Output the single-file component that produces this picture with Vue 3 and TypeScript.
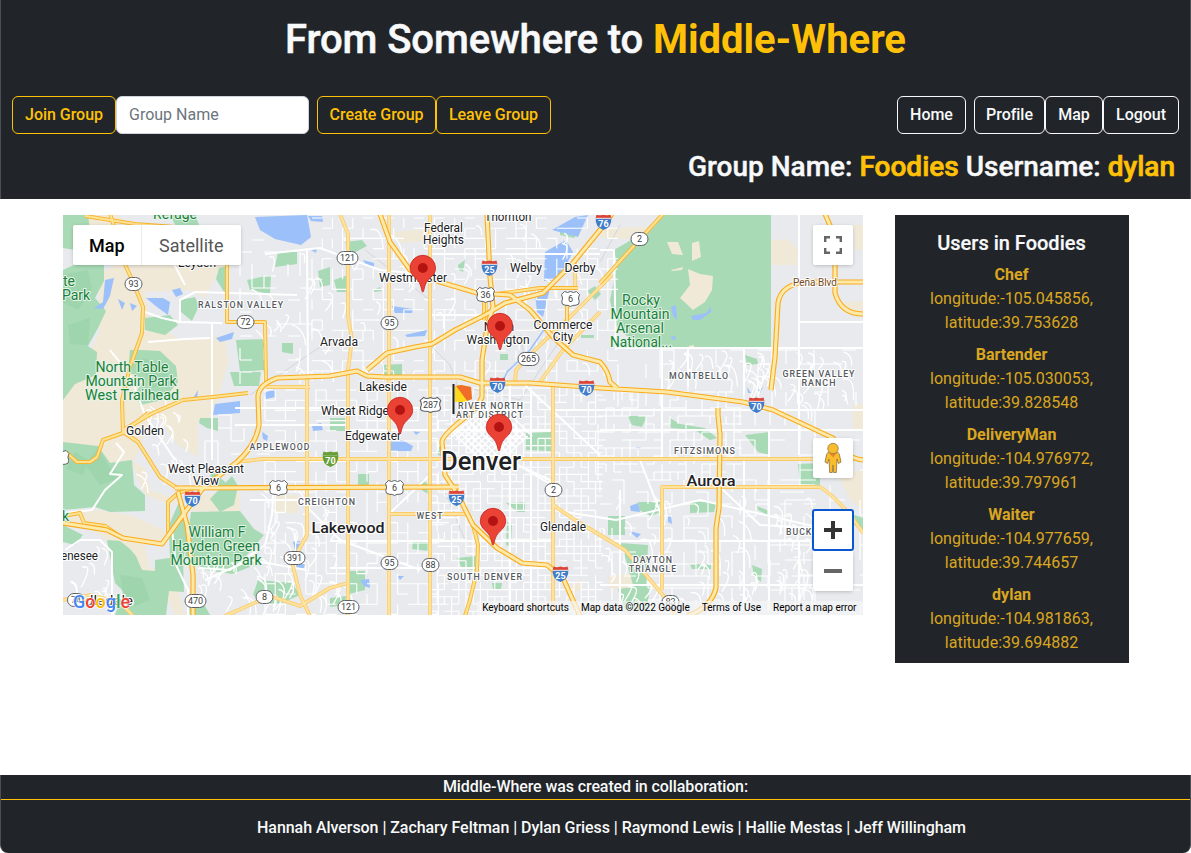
<script setup lang="ts">
interface Member { name: string; lng: string; lat: string }
interface Label { x: number; y: number; t: string; c: string; l?: number }
interface Shield { x: number; y: number; t: string; k: string }

const members: Member[] = [
  { name: 'Chef', lng: '-105.045856', lat: '39.753628' },
  { name: 'Bartender', lng: '-105.030053', lat: '39.828548' },
  { name: 'DeliveryMan', lng: '-104.976972', lat: '39.797961' },
  { name: 'Waiter', lng: '-104.977659', lat: '39.744657' },
  { name: 'dylan', lng: '-104.981863', lat: '39.694882' },
]

const tan: string[] = [
  '88,215 118,215 130,228 240,236 240,262 220,268 205,298 190,290 145,292 150,320 180,340 225,336 228,362 212,420 150,420 135,460 63,470 63,378 85,366 100,330 98,275 120,262 90,245',
  '160,420 198,420 198,457 178,445', '130,460 145,468 150,490 180,500 170,505 145,495',
  '63,517 90,509 130,515 165,530 165,545 145,545 150,570 170,560 185,615 175,615 160,580 135,570 122,550 100,535',
  '200,495 240,493 240,512 192,511', '275,495 298,495 298,513 276,513', '393,232 432,229 432,240 400,243',
  '600,229 655,226 650,240 602,238', '771,241 787,239 798,250 797,265 772,265', '840,303 863,301 863,314 845,312',
  '838,475 863,470 863,510 850,500', '608,577 632,573 632,589 610,589', '572,584 580,580 581,590 573,592', '853,404 863,404 863,430 853,430', '853,225 863,225 863,250 855,250',
]
const green: string[] = [
  '63,215 88,215 90,230 75,250 63,248', '170,215 195,215 202,232 178,230',
  '63,270 80,262 104,265 104,281 95,298 106,311 98,328 88,346 97,352 96,375 75,384 63,400',
  '85,254 100,256 104,266 86,265', '130,350 142,350 160,351 176,366 178,382 163,400 140,405 135,393 145,380 128,372',
  '145,318 170,315 178,325 165,335 145,330', '180,300 195,297 199,306 192,321 181,312',
  '236,340 265,339 264,370 240,372', '230,372 261,372 259,386 234,386', '219,268 229,266 229,290 224,292 216,279',
  '247,280 271,275 270,294 250,290', '278,252 297,252 297,264 275,267', '318,271 330,267 330,285 320,287',
  '282,343 293,343 293,354 282,352', '63,442 98,446 110,463 132,460 134,485 145,495 145,511 110,512 95,507 63,510',
  '107,540 120,541 130,549 136,556 142,570 155,571 155,560 170,558 169,525 180,500 190,525 183,560 184,592 169,591 166,615 115,615 124,592 115,583',
  '191,512 240,511 254,529 264,535 246,556 250,567 232,574 206,570 185,558', '207,490 212,470 226,483 222,490',
  '232,476 238,486 234,505 220,512 210,499', '200,418 218,418 218,431 207,428 199,423',
  '63,525 83,535 75,545 63,542', '188,597 200,597 210,615 190,615', '258,580 292,583 300,595 275,606 253,595',
  '662,215 771,215 771,348 640,348 615,325 610,300 617,265 614,250 655,226', '560,225 580,228 574,238 560,235',
  '345,242 362,240 367,246 352,254', '334,280 348,275 346,292 337,292', '458,265 465,260 463,272 459,270',
  '373,290 380,287 382,291 373,292', '382,365 402,364 402,376 384,379', '330,418 345,418 345,431 330,431',
  '438,446 443,441 443,457 438,455', '526,433 551,432 551,451 526,450',
  '358,474 369,474 369,485 358,485', '422,480 430,485 428,494 420,489', '506,503 525,502 525,512 518,512',
  '507,522 512,524 511,547 506,545', '413,541 429,542 429,551 412,549', '457,558 476,556 475,570 462,569',
  '349,571 365,571 365,590 349,594', '330,598 346,596 345,605 330,607', '492,583 502,583 501,589 493,589',
  '745,355 757,359 758,364 747,365', '745,435 769,432 769,455 758,452', '670,418 680,424 705,428 717,438 710,440 695,430 671,428',
  '628,416 647,416 642,427 632,425', '638,502 661,502 661,512 651,516 639,510', '690,501 716,503 714,512 690,513',
  '608,516 625,516 625,535 608,535', '620,543 648,545 646,590 635,592 626,560', '618,589 650,585 647,610 625,610',
  '752,565 762,569 761,582 754,576', '798,464 820,463 820,485 800,484', '757,506 769,511 768,515 758,510',
  '690,564 711,565 711,569 692,569', '587,291 595,286 601,294 595,300', '581,335 594,335 594,338 581,338',
  '500,354 508,354 508,360 500,360', '854,515 863,518 863,530 854,525',
]
const forest: string[] = [
  '63,275 88,270 92,290 78,310 63,303', '68,325 90,318 88,345 70,344', '142,358 165,365 170,384 150,388',
  '98,448 110,468 125,476 100,485 85,465', '120,575 142,578 150,600 125,610', '75,452 88,460 83,475 66,469',
]
const islands: string[] = ['667,242 678,242 683,255 672,254', '692,243 699,241 701,257 692,261', '688,269 700,274 713,276 712,290 705,302 693,310 680,298 690,285', '671,270 683,267 682,270 672,271', '689,346 694,345 694,348 689,348']
const water: string[] = [
  '255,217 307,215 311,237 301,245 275,239 260,230', '105,280 114,278 110,296 103,309 94,308 103,302',
  '118,299 125,303 122,310', '130,303 137,306 132,311', '146,298 163,298 170,302 168,315 157,307', '172,290 180,288 183,294 176,297',
  '216,338 234,332 232,339 220,342', '192,400 198,390 197,400', '215,404 240,401 240,413 213,415', '264,393 275,389 275,397 266,399',
  '363,260 374,263 374,267 366,265', '392,306 413,309 412,313 395,313', '405,335 427,330 425,336 407,337',
  '391,440 402,440 413,446 411,451 391,451', '545,252 566,240 573,252 558,280 544,281', '552,230 575,217 588,215 578,237',
  '535,293 550,288 543,317 537,312', '671,307 676,305 677,320 673,316', '691,316 706,313 711,307 711,312 700,320 693,320',
  '670,337 676,336 675,341', '747,387 751,393 748,393', '758,390 763,387 760,393', '630,506 638,503 640,512 631,511',
  '629,531 641,534 637,538', '668,516 671,516 672,524 668,522', '293,542 300,541 302,549 295,550', '293,566 305,563 304,568 296,569',
  '360,580 369,579 370,588 364,586', '413,431 420,432 416,435', '636,447 641,447 638,450', '397,576 404,576 400,580',
  '262,432 268,436 267,441 263,439', '312,425 321,423 323,430 313,431', '308,216 322,216 323,222 311,221', '311,250 317,248 316,253',
]

const motorways: string[] = [
  'M487 214 490 277 493 307 487 327 482 360 482 397 Q478 408 462 420 Q442 436 442 442 L445 475 458 495 473 525 497 548 522 563 547 565 563 578 580 616',
  'M63 523 107 530 123 538 162 544 183 515 203 488 237 462 Q256 445 259 425 L258 397 Q258 385 277 378 L330 376 357 371 367 376 385 377 460 377 480 383 530 383 600 388 667 392 743 402 773 410 833 438 Q845 458 863 460',
  'M380 214 390 242 410 270 440 282 477 293 510 295 530 310 553 337 573 355 600 362 Q608 370 610 382 L617 388',
  'M367 370 387 353 415 347 432 344 455 330 485 315 505 303 543 293 573 263 600 230 612 214',
  'M175 488 459 487', 'M771 390 775 357 778 303 Q781 284 807 282 L863 282',
  'M825 214 835 237 835 293 Q841 314 863 314',
  'M718 408 718 415 720 435 719 508 716 528 716 588 Q711 608 687 616',
  'M178 492 187 525 193 575 193 616',
]
const highways: string[] = [
  'M110 214 117 235 123 260 133 282 143 307 142 333 130 367 122 400 123 432 138 442 160 477 177 488',
  'M123 430 153 413 183 400 213 397 248 393', 'M85 216 135 224 175 227',
  'M63 456 67 453 77 462 90 462 97 457 103 440 123 433 148 413', 'M168 533 168 502 178 493 197 487',
  'M63 516 80 513 84 523 105 526 122 538', 'M484 320 484 300 490 295 540 288 578 288',
  'M663 214 600 283', 'M863 0', 'M567 295 567 330',
  'M473 525 478 545 477 570 470 600 465 616', 'M227 240 227 322 265 322 266 385',
]
const arterials: string[] = [
  'M340 214 348 234 348 316 352 340 348 370 348 616', 'M389 214V616', 'M430 214V616', 'M553 385V616',
  'M307 378 307 535 292 562 300 595 310 616', 'M266 387H310', 'M237 462 262 459H863', 'M662 590V487H820Q841 500 863 533',
  'M390 514H465', 'M486 300V335', 'M612 275 570 317 540 345 516 370 515 382', 'M575 262 575 290', 'M600 312 563 350 540 382',
  'M553 505 575 520 600 535 625 550 667 600 675 616', 'M225 616 270 596 300 606 330 588 348 583', 'M63 600 90 595 120 602 133 616',
]
const whiteRoads: string[] = [
  'M145 312 162 318 180 322 222 323', 'M180 322 180 300 195 292 297 295', 'M148 342 185 339 210 338', 'M212 323V460', 'M110 350 130 375 145 415 175 460', 'M100 220 165 226 172 260 185 285',
  'M116 443 124 452 110 474 122 475 105 490 92 510 65 513', 'M65 550 80 540 100 540 112 552 112 616', 'M172 530 176 565 188 590 188 616',
  'M200 568 230 570 265 545 272 515 274 480', 'M250 500 300 500 340 540 420 570', 'M205 580 250 560 307 570', 'M265 254 320 248 380 270 430 275', 'M307 248 308 376',
  'M430 254H600', 'M430 315H490', 'M600 250 614 250 616 350', 'M616 348H863', 'M799 214V455', 'M744 348V395', 'M662 348V460', 'M688 348V386', 'M799 322H863',
  'M345 430H553', 'M553 410H863', 'M553 510 616 520 700 500 830 530', 'M608 541H810', 'M330 541H553', 'M510 385V615', 'M531 390V615', 'M389 514 430 475', 'M330 568H553', 'M720 487 760 525 810 528',
  'M600 430 863 430', 'M600 585H863', 'M620 490V615', 'M640 460 665 525', 'M744 460V610', 'M769 430V610', 'M799 540V610', 'M475 400 510 460 560 490 555 500', 'M525 385 600 455', 'M526 469 550 480 553 490', 'M235 408H430', 'M235 425H348',
]

// Local street fabric: short deterministic segments that break up like real blocks.
let seed = 41
function rnd(): number {
  seed = (seed * 16807) % 2147483647
  return seed / 2147483647
}
function streets(x0: number, y0: number, x1: number, y1: number, step: number, keep: number): string {
  let d = ''
  for (let x = x0; x < x1; x += step)
    for (let y = y0; y < y1; y += step) {
      if (rnd() < keep) d += `M${x} ${y}h${step}`
      if (rnd() < keep) d += `M${x} ${y}v${step}`
    }
  return d
}
function curls(x0: number, y0: number, x1: number, y1: number, n: number): string {
  let d = ''
  for (let i = 0; i < n; i++) {
    const x = x0 + rnd() * (x1 - x0)
    const y = y0 + rnd() * (y1 - y0)
    const a = 8 + rnd() * 14
    d += `M${x.toFixed(1)} ${y.toFixed(1)}q${(a * 0.6).toFixed(1)} ${(rnd() * 10 - 5).toFixed(1)} ${(a * (rnd() - 0.3)).toFixed(1)} ${a.toFixed(1)}`
  }
  return d
}
const fineStreets =
  streets(312, 218, 612, 380, 10.2, 0.36) + streets(265, 390, 440, 616, 10.2, 0.5) +
  streets(430, 388, 600, 616, 7.2, 0.68) + streets(598, 392, 740, 480, 8, 0.52) +
  streets(600, 480, 810, 616, 12, 0.36) + streets(618, 350, 863, 405, 14, 0.3) + streets(740, 410, 863, 616, 15, 0.22) +
  streets(240, 240, 312, 375, 12, 0.26) + streets(205, 415, 265, 480, 13, 0.3)
const curvyStreets =
  curls(310, 220, 600, 370, 45) + curls(660, 350, 800, 385, 34) + curls(790, 350, 850, 410, 20) + curls(600, 495, 810, 605, 75) +
  curls(195, 555, 345, 600, 44) + curls(260, 490, 345, 560, 22) + curls(130, 395, 185, 480, 20) + curls(68, 535, 110, 600, 12) + curls(240, 250, 330, 370, 18)
let downtown = ''
for (let i = 0; i < 12; i++) {
  downtown += `M${452 + i * 4.2} ${431 - i * 2.6}l34 34`
  downtown += `M${452 + i * 3.6} ${437 + i * 3}l36 -34`
}

const labels: Label[] = [
  { x: 175, y: 219, t: 'Refuge', c: 'park' }, { x: 197, y: 267, t: 'Leyden', c: 'town' },
  { x: 63, y: 286, t: 'te', c: 'park start' }, { x: 62, y: 300, t: 'Park', c: 'park start' },
  { x: 241, y: 308, t: 'RALSTON VALLEY', c: 'hood', l: 86 }, { x: 339, y: 345.5, t: 'Arvada', c: 'town', l: 38 },
  { x: 132, y: 372, t: 'North Table', c: 'park', l: 73 }, { x: 131, y: 386, t: 'Mountain Park', c: 'park', l: 91 }, { x: 132, y: 400, t: 'West Trailhead', c: 'park', l: 94 },
  { x: 443.5, y: 231.5, t: 'Federal', c: 'town', l: 39 }, { x: 443.5, y: 243.5, t: 'Heights', c: 'town', l: 41 }, { x: 508, y: 221, t: 'Thornton', c: 'town', l: 47 },
  { x: 413, y: 281.5, t: 'Westminster', c: 'town', l: 68 }, { x: 526, y: 271.5, t: 'Welby', c: 'town', l: 32 }, { x: 580, y: 271.5, t: 'Derby', c: 'town', l: 31 },
  { x: 499, y: 331, t: 'North', c: 'town' }, { x: 498, y: 343.5, t: 'Washington', c: 'town', l: 63 },
  { x: 563, y: 328.5, t: 'Commerce', c: 'town', l: 59 }, { x: 563, y: 340.5, t: 'City', c: 'town' }, { x: 383, y: 390.5, t: 'Lakeside', c: 'town', l: 48 },
  { x: 355, y: 414.5, t: 'Wheat Ridge', c: 'town', l: 68 }, { x: 373, y: 439.5, t: 'Edgewater', c: 'town', l: 56 },
  { x: 491, y: 408.5, t: 'RIVER NORTH', c: 'hood', l: 66 }, { x: 490, y: 417.5, t: 'ART DISTRICT', c: 'hood', l: 68 },
  { x: 641, y: 305, t: 'Rocky', c: 'park', l: 38 }, { x: 640, y: 319, t: 'Mountain', c: 'park', l: 59 }, { x: 640, y: 333, t: 'Arsenal', c: 'park', l: 48 }, { x: 641, y: 347, t: 'National...', c: 'park', l: 62 },
  { x: 815, y: 286, t: 'Peña Blvd', c: 'road', l: 44 }, { x: 699, y: 378.5, t: 'MONTBELLO', c: 'hood', l: 60 },
  { x: 819, y: 376.5, t: 'GREEN VALLEY', c: 'hood', l: 73 }, { x: 819, y: 385.5, t: 'RANCH', c: 'hood', l: 35 },
  { x: 145, y: 434.5, t: 'Golden', c: 'town', l: 38 }, { x: 280, y: 449.5, t: 'APPLEWOOD', c: 'hood', l: 61 },
  { x: 206, y: 472.5, t: 'West Pleasant', c: 'town', l: 76 }, { x: 206, y: 484.5, t: 'View', c: 'town', l: 26 },
  { x: 327, y: 504.5, t: 'CREIGHTON', c: 'hood', l: 58 }, { x: 348, y: 532.5, t: 'Lakewood', c: 'city', l: 73 },
  { x: 217, y: 537, t: 'William F', c: 'park', l: 57 }, { x: 216, y: 551, t: 'Hayden Green', c: 'park', l: 88 }, { x: 216, y: 565, t: 'Mountain Park', c: 'park', l: 91 },
  { x: 61, y: 559.5, t: 'enesee', c: 'town start', l: 37 }, { x: 62, y: 521, t: 'k', c: 'park start' },
  { x: 481, y: 470, t: 'Denver', c: 'metro', l: 80 }, { x: 430, y: 518.5, t: 'WEST', c: 'hood', l: 27 }, { x: 563, y: 530.5, t: 'Glendale', c: 'town', l: 46 },
  { x: 485, y: 579.5, t: 'SOUTH DENVER', c: 'hood', l: 76 }, { x: 705, y: 453.5, t: 'FITZSIMONS', c: 'hood', l: 62 },
  { x: 711, y: 485.5, t: 'Aurora', c: 'city', l: 49 }, { x: 653, y: 562.5, t: 'DAYTON', c: 'hood', l: 40 }, { x: 653, y: 571.5, t: 'TRIANGLE', c: 'hood', l: 48 },
  { x: 786, y: 534.5, t: 'BUCKLEY', c: 'hood start' }, { x: 107, y: 605, t: 'Idledale', c: 'town', l: 52 },
]
const shields: Shield[] = [
  { x: 133.5, y: 284, t: '93', k: 's' }, { x: 245.5, y: 322, t: '72', k: 's' }, { x: 347.5, y: 258, t: '121', k: 's' }, { x: 389.5, y: 323, t: '95', k: 's' },
  { x: 528.5, y: 359, t: '265', k: 's' }, { x: 639.5, y: 239, t: '2', k: 's' }, { x: 294.5, y: 558, t: '391', k: 's' }, { x: 264.5, y: 597, t: '8', k: 's' },
  { x: 195.5, y: 601, t: '470', k: 's' }, { x: 389.5, y: 563, t: '95', k: 's' }, { x: 430.5, y: 565, t: '88', k: 's' }, { x: 553.5, y: 490, t: '2', k: 's' },
  { x: 348.5, y: 607, t: '121', k: 's' }, { x: 670.5, y: 602, t: '83', k: 's' }, { x: 76, y: 600, t: '74', k: 's' },
  { x: 485.5, y: 295, t: '36', k: 'u' }, { x: 570.5, y: 299, t: '6', k: 'u' }, { x: 430.5, y: 405, t: '287', k: 'u' }, { x: 278.5, y: 488, t: '6', k: 'u' }, { x: 394.5, y: 488, t: '6', k: 'u' }, { x: 60, y: 458, t: '', k: 'u' },
  { x: 489.5, y: 268, t: '25', k: 'i' }, { x: 603.5, y: 222, t: '76', k: 'i' }, { x: 497.5, y: 385, t: '70', k: 'i' }, { x: 586.5, y: 388, t: '70', k: 'i' }, { x: 756.5, y: 405, t: '70', k: 'i' },
  { x: 192.5, y: 499, t: '70', k: 'i' }, { x: 456.5, y: 498, t: '25', k: 'i' }, { x: 560.5, y: 574, t: '25', k: 'i' }, { x: 330.5, y: 459, t: '70', k: 'b' },
]
const pins: [number, number][] = [[422.8, 268], [500, 326], [400, 410], [499, 427], [493, 521]]
const logo = [
  { ch: 'G', c: '#4285f4' }, { ch: 'o', c: '#ea4335' }, { ch: 'o', c: '#fbbc04' }, { ch: 'g', c: '#4285f4' }, { ch: 'l', c: '#34a853' }, { ch: 'e', c: '#ea4335' },
]
const authors = 'Hannah Alverson | Zachary Feltman | Dylan Griess | Raymond Lewis | Hallie Mestas | Jeff Willingham'
</script>

<template>
  <div class="page">
    <header class="top">
      <h1>From Somewhere to <span class="gold">Middle-Where</span></h1>
      <nav class="bar">
        <button class="btn join">Join Group</button>
        <input class="field" type="text" placeholder="Group Name" />
        <button class="btn create">Create Group</button>
        <button class="btn leave">Leave Group</button>
        <span class="spacer"></span>
        <button class="btn light home">Home</button>
        <button class="btn light profile">Profile</button>
        <button class="btn light mapbtn">Map</button>
        <button class="btn light logout">Logout</button>
      </nav>
      <h3>Group Name: <span class="gold">Foodies</span> Username: <span class="gold">dylan</span></h3>
    </header>

    <main class="body">
      <section class="map">
        <svg class="canvas" viewBox="63 215 800 400" width="800" height="400">
          <rect x="63" y="215" width="800" height="400" fill="#e8eaed" />
          <polygon v-for="(p, i) in tan" :key="'t' + i" :points="p" fill="#f0e9d8" />
          <polygon v-for="(p, i) in green" :key="'g' + i" :points="p" fill="#a8dab5" />
          <polygon v-for="(p, i) in forest" :key="'f' + i" :points="p" fill="#98d2a8" opacity=".6" />
          <polygon v-for="(p, i) in islands" :key="'i' + i" :points="p" fill="#f0e9d8" />
          <polygon v-for="(p, i) in water" :key="'w' + i" :points="p" fill="#9cc0f9" />
          <g fill="none" stroke="#d3d6db" stroke-width="1">
            <path d="M430 345 450 365 470 420M455 385 520 400 560 340M520 335 525 360M600 262 620 225M440 480 465 540M250 395 330 340M365 250 430 300" />
          </g>
          <g fill="none" stroke="#fff" stroke-linejoin="round">
            <path :d="fineStreets" stroke-width="1.1" />
            <path :d="curvyStreets" stroke-width="1.3" />
            <path :d="downtown" stroke-width="1.5" />
            <path v-for="(d, i) in whiteRoads" :key="'r' + i" :d="d" stroke-width="2" />
          </g>
          <path d="M502 384 507 372 530 350 545 328" fill="none" stroke="#9cc0f9" stroke-width="1.5" />
          <g fill="none" stroke-linejoin="round">
            <path v-for="(d, i) in arterials" :key="'a' + i" :d="d" stroke="#fbcb68" stroke-width="3.8" />
            <path v-for="(d, i) in arterials" :key="'b' + i" :d="d" stroke="#fde2a0" stroke-width="2.2" />
            <path v-for="(d, i) in highways" :key="'c' + i" :d="d" stroke="#f9b52e" stroke-width="4" />
            <path v-for="(d, i) in highways" :key="'d' + i" :d="d" stroke="#fde293" stroke-width="2.2" />
            <path v-for="(d, i) in motorways" :key="'e' + i" :d="d" stroke="#f9ab1c" stroke-width="5.2" />
            <path v-for="(d, i) in motorways" :key="'m' + i" :d="d" stroke="#fde9a9" stroke-width="3" />
          </g>

          <g v-for="(s, i) in shields" :key="'s' + i" :transform="`translate(${s.x} ${s.y})`" text-anchor="middle">
            <template v-if="s.k === 's'">
              <rect :x="s.t.length > 2 ? -10.5 : -8.5" y="-6.5" :width="s.t.length > 2 ? 21 : 17" height="13" rx="6.5" fill="#fff" stroke="#5f6368" />
              <text class="num" y="3.4">{{ s.t }}</text>
            </template>
            <template v-else-if="s.k === 'u'">
              <path :transform="s.t.length > 2 ? 'scale(1.15 1)' : ''" d="M-6 -7.5Q-3 -5.5 0 -7.5Q3 -5.5 6 -7.5L9 -4.5Q7 -1 8.7 2.5Q9 6 5.5 6.2Q2 6 0 7.5Q-2 6 -5.5 6.2Q-9 6 -8.7 2.5Q-7 -1 -9 -4.5Z" fill="#fff" stroke="#5f6368" />
              <text class="num" y="3.4">{{ s.t }}</text>
            </template>
            <template v-else>
              <path d="M-7 -7.5Q-3.5 -6 0 -7.5Q3.5 -6 7 -7.5L8 -3.5H-8Z" :fill="s.k === 'b' ? '#689f38' : '#db4437'" />
              <path d="M-7.8 -3.5H7.8Q8.5 5 0 8Q-8.5 5 -7.8 -3.5Z" :fill="s.k === 'b' ? '#689f38' : '#3f7dcb'" />
              <path v-if="s.k === 'i'" d="M-7.8 -3.7H7.8" stroke="#fff" stroke-width=".8" />
              <text class="inum" y="4.5">{{ s.t }}</text>
            </template>
          </g>

          <text v-for="(l, i) in labels" :key="'l' + i" :x="l.x" :y="l.y" :class="l.c" :textLength="l.l" lengthAdjust="spacingAndGlyphs">{{ l.t }}</text>

          <g>
            <path d="M453.5 384V414" stroke="#222" stroke-width="2" />
            <path d="M455 386 461 385 471 387 472 399 463 402 455 401Z" fill="#fbd116" />
            <path d="M456 386 461 385 471 387 472 399 467 401Z" fill="#ef6c2a" />
            <path d="M456 386 467 401 455 402Z" fill="#ffd91c" />
          </g>
          <g v-for="(p, i) in pins" :key="'p' + i" :transform="`translate(${p[0]} ${p[1]})`">
            <path d="M0 24C-1.5 24 -1 17 -5 12.5C-8.5 8.5 -12.7 6 -12.7 0A12.7 12.7 0 0 1 12.7 0C12.7 6 8.5 8.5 5 12.5C1 17 1.5 24 0 24Z" fill="#ea4335" stroke="#c5221f" stroke-width=".8" />
            <circle r="5" fill="#b31412" />
          </g>
        </svg>

        <div class="types"><span class="on">Map</span><span>Satellite</span></div>
        <div class="ctl full">
          <svg width="20" height="20" viewBox="0 0 20 20"><path d="M2.2 7V2.2H7M13 2.2H17.8V7M17.8 13V17.8H13M7 17.8H2.2V13" fill="none" stroke="#666" stroke-width="2.4" /></svg>
        </div>
        <div class="ctl peg">
          <svg width="20" height="32" viewBox="0 0 20 32">
            <path d="M5.500 10H14.500Q16 11 16.500 13L18 20 15.500 21.500 14 17 13.300 30.500H10.700L10 23 9.300 30.500H6.700L6 17 4.500 21.500 2 20 3.500 13Q4 11 5.500 10Z" fill="#fbbc2b" stroke="#8a7340" stroke-width=".8" stroke-linejoin="round" />
            <path d="M6 11H14L10 15.5Z" fill="#e8862e" />
            <circle cx="10" cy="6.5" r="5.2" fill="#fbbc2b" stroke="#8a7340" stroke-width=".8" />
          </svg>
        </div>
        <div class="zoom">
          <div class="in"><svg width="20" height="20" viewBox="0 0 20 20"><path d="M10 1V19M1 10H19" stroke="#333" stroke-width="4" /></svg></div>
          <div class="out"><svg width="20" height="20" viewBox="0 0 20 20"><path d="M1 10H19" stroke="#666" stroke-width="4" /></svg></div>
        </div>
        <div class="logo"><span v-for="(g, i) in logo" :key="i" :style="{ color: g.c }">{{ g.ch }}</span></div>
        <div class="legal"><span class="l1">Keyboard shortcuts</span><span class="l2">Map data ©2022 Google</span><span class="l3">Terms of Use</span><span class="l4">Report a map error</span></div>
      </section>

      <aside class="users">
        <h5>Users in Foodies</h5>
        <div v-for="m in members" :key="m.name" class="user">
          <b>{{ m.name }}</b>
          <span>longitude:{{ m.lng }},</span>
          <span>latitude:{{ m.lat }}</span>
        </div>
      </aside>
    </main>

    <footer class="foot">
      <p class="credit">Middle-Where was created in collaboration:</p>
      <p class="names">{{ authors }}</p>
    </footer>
  </div>
</template>

<style>
body { margin: 0; background: #fff; }
</style>

<style scoped>
* { box-sizing: border-box; }
.page { width: 1191px; height: 853px; display: flex; flex-direction: column; overflow: hidden; background: #fff; font-family: Roboto, "Liberation Sans", sans-serif; font-size: 16px; line-height: 24px; color: #f8f9fa; }
.gold { color: #ffc107; }
.top { height: 199px; background: #212529; border-left: 1px solid #4b4f53; border-right: 1px solid #4b4f53; padding: 16px 11px 0; }
h1 { margin: 0; font-size: 40px; font-weight: 500; line-height: 48px; letter-spacing: -.1px; text-align: center; white-space: nowrap; -webkit-text-stroke: .5px currentColor; }
h1 .gold { font-weight: 700; letter-spacing: -.05px; -webkit-text-stroke: 0; }
.bar { display: flex; margin-top: 32px; height: 38px; }
.btn { height: 38px; padding: 0; background: transparent; border: 1px solid #ffc107; border-radius: 6px; color: #ffc107; font: 500 16px/24px Roboto, sans-serif; letter-spacing: -.03px; white-space: nowrap; }
.light { border-color: #f8f9fa; color: #f8f9fa; }
.join { width: 104px; }
.field { width: 193px; height: 38px; margin-right: 8px; padding: 5px 12px 7px; border: 1px solid #ced4da; border-radius: 6px; background: #fff; font: 400 16px/24px Roboto, sans-serif; }
.field::placeholder { color: #6c757d; opacity: 1; }
.create { width: 119px; }
.leave { width: 115px; }
.spacer { flex: 1; }
.home { width: 69px; margin-right: 8px; }
.profile { width: 71px; }
.mapbtn { width: 58px; }
.logout { width: 76px; }
h3 { margin: 16px 4px 0 0; font-size: 28px; font-weight: 500; line-height: 34px; text-align: right; white-space: nowrap; -webkit-text-stroke: .4px currentColor; }
h3 .gold { -webkit-text-stroke-width: .7px; }
.body { display: flex; align-items: flex-start; gap: 32px; height: 576px; padding: 16px 0 0 63px; }
.map { position: relative; width: 800px; height: 400px; overflow: hidden; }
.canvas { display: block; }
.canvas text { font-family: Roboto, sans-serif; text-anchor: middle; paint-order: stroke; stroke: #fff; stroke-width: 2.2px; stroke-linejoin: round; }
.canvas text.start { text-anchor: start; }
.canvas .town { font-size: 12px; fill: #202124; }
.canvas .park { font-size: 14px; fill: #188038; stroke: #e5f4e9; stroke-width: 2px; }
.canvas .hood { font-size: 8.7px; font-weight: 500; letter-spacing: 1px; fill: #55595e; }
.canvas .city { font-size: 15.5px; font-weight: 500; fill: #202124; }
.canvas .metro { font-size: 25px; font-weight: 500; fill: #202124; stroke-width: 3px; }
.canvas .road { font-size: 10.5px; fill: #74491c; }
.canvas .num { font-size: 9px; fill: #3c4043; stroke: none; }
.canvas .inum { font-size: 9px; font-weight: 700; fill: #fff; stroke: none; }
.types { position: absolute; left: 10px; top: 10px; display: flex; width: 168px; height: 40px; background: #fff; border-radius: 2px; box-shadow: 0 1px 4px -1px rgba(0, 0, 0, .3); font-size: 18px; line-height: 41px; color: #565656; text-align: center; }
.types span { width: 100px; }
.types .on { width: 69px; color: #000; font-weight: 500; border-right: 1px solid #ebebeb; }
.ctl { position: absolute; right: 10px; display: grid; place-items: center; width: 40px; height: 40px; background: #fff; border-radius: 2px; box-shadow: 0 1px 4px -1px rgba(0, 0, 0, .3); }
.full { top: 10px; }
.peg { top: 223px; }
.zoom { position: absolute; right: 9px; top: 294px; width: 42px; height: 82px; display: flex; flex-direction: column; align-items: center; }
.in { display: grid; place-items: center; width: 42px; height: 42px; background: #fff; border: 2px solid #0b57d0; border-radius: 3px; z-index: 1; }
.out { display: grid; place-items: center; width: 40px; height: 40px; background: #fff; border-radius: 0 0 2px 2px; box-shadow: 0 1px 4px -1px rgba(0, 0, 0, .3); }
.logo { position: absolute; left: 10px; top: 377px; font: 500 18px/20px Roboto, sans-serif; text-shadow: 0 0 1px #fff, 0 0 1px #fff, 0 0 2px #fff, 0 0 2px #fff; }
.legal { position: absolute; right: 0; bottom: 0; display: flex; height: 14px; padding-right: 6.5px; background: rgba(245, 245, 245, .7); font-size: 10px; line-height: 14px; color: #000; white-space: nowrap; }
.legal span { margin-left: 12px; }
.legal .l1 { margin-left: 5px; }
.users { width: 234px; height: 448px; padding: 16px 1px 0 0; background: #212529; text-align: center; }
h5 { margin: 0 0 8px; font-size: 20px; font-weight: 500; line-height: 24px; -webkit-text-stroke: .2px currentColor; }
.user { display: flex; flex-direction: column; margin-bottom: 8px; color: #daa520; }
.user b { font-weight: 700; }
.foot { flex: 1; background: #212529; border-left: 1px solid #4b4f53; border-right: 1px solid #4b4f53; border-radius: 0 0 8px 8px; text-align: center; font-weight: 500; }
.credit { margin: 0; height: 25px; border-bottom: 1px solid #ffc107; letter-spacing: -.1px; }
.names { margin: 16px 0 0 32px; letter-spacing: -.055px; white-space: nowrap; }
</style>
